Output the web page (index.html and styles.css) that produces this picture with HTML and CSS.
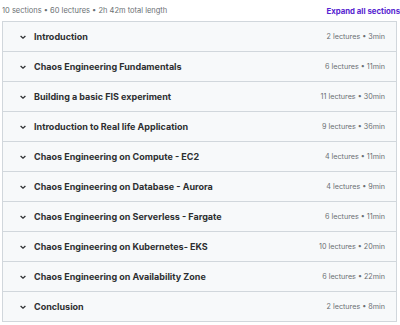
FILE: index.html
```html
<!DOCTYPE html>
<html lang="en">
<head>
    <meta charset="UTF-8">
    <title>Course content</title>
    <link rel="stylesheet" href="styles.css">
</head>
<body>
    <div class="summary">
        <span class="stats">10 sections • 60 lectures • 2h 42m total length</span>
        <button class="expand-btn">Expand all sections</button>
    </div>

    <div class="sections">
        <div class="section">
            <span class="chevron"><svg viewBox="0 0 10 10"><path d="M2.6 4 5 6.2 7.4 4"/></svg></span>
            <span class="title">Introduction</span>
            <span class="meta">2 lectures • 3min</span>
        </div>
        <div class="section">
            <span class="chevron"><svg viewBox="0 0 10 10"><path d="M2.6 4 5 6.2 7.4 4"/></svg></span>
            <span class="title">Chaos Engineering Fundamentals</span>
            <span class="meta">6 lectures • 11min</span>
        </div>
        <div class="section">
            <span class="chevron"><svg viewBox="0 0 10 10"><path d="M2.6 4 5 6.2 7.4 4"/></svg></span>
            <span class="title">Building a basic FIS experiment</span>
            <span class="meta">11 lectures • 30min</span>
        </div>
        <div class="section">
            <span class="chevron"><svg viewBox="0 0 10 10"><path d="M2.6 4 5 6.2 7.4 4"/></svg></span>
            <span class="title">Introduction to Real life Application</span>
            <span class="meta">9 lectures • 36min</span>
        </div>
        <div class="section">
            <span class="chevron"><svg viewBox="0 0 10 10"><path d="M2.6 4 5 6.2 7.4 4"/></svg></span>
            <span class="title">Chaos Engineering on Compute - EC2</span>
            <span class="meta">4 lectures • 11min</span>
        </div>
        <div class="section">
            <span class="chevron"><svg viewBox="0 0 10 10"><path d="M2.6 4 5 6.2 7.4 4"/></svg></span>
            <span class="title">Chaos Engineering on Database - Aurora</span>
            <span class="meta">4 lectures • 9min</span>
        </div>
        <div class="section">
            <span class="chevron"><svg viewBox="0 0 10 10"><path d="M2.6 4 5 6.2 7.4 4"/></svg></span>
            <span class="title">Chaos Engineering on Serverless - Fargate</span>
            <span class="meta">6 lectures • 11min</span>
        </div>
        <div class="section">
            <span class="chevron"><svg viewBox="0 0 10 10"><path d="M2.6 4 5 6.2 7.4 4"/></svg></span>
            <span class="title">Chaos Engineering on Kubernetes- EKS</span>
            <span class="meta">10 lectures • 20min</span>
        </div>
        <div class="section">
            <span class="chevron"><svg viewBox="0 0 10 10"><path d="M2.6 4 5 6.2 7.4 4"/></svg></span>
            <span class="title">Chaos Engineering on Availability Zone</span>
            <span class="meta">6 lectures • 22min</span>
        </div>
        <div class="section">
            <span class="chevron"><svg viewBox="0 0 10 10"><path d="M2.6 4 5 6.2 7.4 4"/></svg></span>
            <span class="title">Conclusion</span>
            <span class="meta">2 lectures • 8min</span>
        </div>
    </div>
</body>
</html>
```

FILE: styles.css
```css
body {
    margin: 0;
    padding: 0 3px 0 2px;
    font-family: Inter, "Noto Sans", sans-serif;
    color: #2d2f31;
    background-color: #fff;
}
.summary {
    height: 21px;
    display: flex;
    justify-content: space-between;
    align-items: center;
    margin-right: -3px;
}
.stats {
    font-size: 7.5px;
    color: #6a6f73;
}
.expand-btn {
    border: none;
    background: none;
    padding: 0;
    font-family: inherit;
    font-size: 7.8px;
    font-weight: 700;
    color: #5624d0;
    cursor: pointer;
}
.sections {
    border: 1px solid #d1d7dc;
}
.section {
    height: 29px;
    display: flex;
    align-items: center;
    padding: 0 11px 0 15px;
    background-color: #f7f9fa;
    border-bottom: 1px solid #d1d7dc;
}
.section:last-child {
    border-bottom: none;
}
.chevron {
    width: 10px;
    height: 10px;
    margin-right: 6px;
    flex-shrink: 0;
}
.chevron svg {
    display: block;
    width: 10px;
    height: 10px;
    fill: none;
    stroke: #2d2f31;
    stroke-width: 1.3;
}
.title {
    flex: 1;
    font-size: 9px;
    font-weight: 700;
}
.meta {
    font-size: 7.2px;
    color: #6a6f73;
}
```
